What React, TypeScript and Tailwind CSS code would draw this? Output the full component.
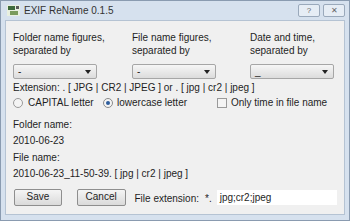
import React from "react";

const font = { fontFamily: '"Liberation Sans", Arial, sans-serif' };

const Combo: React.FC<{ value: string }> = ({ value }) => (
  <div className="flex h-[15px] w-[84px] items-center justify-between rounded-[2px] border border-[#a6a6a6] bg-gradient-to-b from-[#f6f6f6] to-[#dcdcdc] pl-[4px] pr-[5px] text-[10px] leading-none text-[#222]">
    <span>{value}</span>
    <svg width="6" height="4" viewBox="0 0 6 4"><path d="M0 0h6L3 4z" fill="#222" /></svg>
  </div>
);

export default function App() {
  return (
    <div style={font} className="flex h-[221px] w-[350px] flex-col overflow-hidden border border-[#8a9bb0] bg-[#d6e1ee] text-[10px] text-[#1e1e1e]">
      <div className="flex h-[19px] shrink-0 items-center pl-[6px] pr-[4px]">
        <svg width="13" height="11" viewBox="0 0 13 11" className="mr-[4px]">
          <rect x="0" y="0" width="13" height="11" fill="#e8efe0" />
          <rect x="1" y="1" width="7" height="4" fill="#3e6a3c" />
          <rect x="3" y="6" width="8" height="4" fill="#7a9b5c" />
          <rect x="9" y="1" width="3" height="3" fill="#5a5a5a" />
        </svg>
        <span className="text-[10px] text-[#333]">EXIF ReName 0.1.5</span>
        <div className="ml-auto flex gap-[3px]">
          <div className="flex h-[13px] w-[22px] items-center justify-center rounded-[2px] border border-[#9aa9bb] bg-[#e6edf5] text-[8px] text-[#666]">?</div>
          <div className="flex h-[13px] w-[22px] items-center justify-center rounded-[2px] border border-[#9aa9bb] bg-[#e6edf5] text-[8px] text-[#666]">✕</div>
        </div>
      </div>
      <div className="mx-[4px] mb-[5px] flex-1 border border-[#b5c3d3] bg-[#f0f0f0] px-[7px] pt-[10px]">
        <div className="grid grid-cols-[119px_118px_1fr] leading-[13px]">
          <div>
            <div>Folder name figures,</div>
            <div>separated by</div>
          </div>
          <div>
            <div>File name figures,</div>
            <div>separated by</div>
          </div>
          <div>
            <div>Date and time,</div>
            <div>separated by</div>
          </div>
          <div className="mt-[7px]"><Combo value="-" /></div>
          <div className="mt-[7px]"><Combo value="-" /></div>
          <div className="mt-[7px]"><Combo value="_" /></div>
        </div>
        <div className="mt-[2px] whitespace-nowrap leading-[14px]">Extension: . [ JPG | CR2 | JPEG ] or . [ jpg | cr2 | jpeg ]</div>
        <div className="mt-[1px] flex items-center whitespace-nowrap leading-[14px]">
          <span className="mr-[5px] h-[10px] w-[10px] shrink-0 rounded-full border border-[#9a9a9a] bg-[#f4f4f4]" />
          <span className="w-[75px]">CAPITAL letter</span>
          <span className="mr-[4px] flex h-[10px] w-[10px] shrink-0 items-center justify-center rounded-full border border-[#8a8a8a] bg-[#f4f4f4]">
            <span className="h-[4px] w-[4px] rounded-full bg-[#2d5d9c]" />
          </span>
          <span className="w-[100px]">lowercase letter</span>
          <span className="mr-[4px] h-[10px] w-[10px] shrink-0 border border-[#9a9a9a] bg-[#f4f4f4]" />
          <span>Only time in file name</span>
        </div>
        <div className="mt-[8px] leading-[14px]">Folder name:</div>
        <div className="mt-[2px] leading-[14px]">2010-06-23</div>
        <div className="mt-[3px] leading-[14px]">File name:</div>
        <div className="mt-[2px] leading-[14px]">2010-06-23_11-50-39. [ jpg | cr2 | jpeg ]</div>
        <div className="mt-[7px] flex items-center whitespace-nowrap">
          <button className="ml-[1px] h-[17px] w-[48px] rounded-[2px] border border-[#8e8e8e] bg-gradient-to-b from-[#f5f5f5] to-[#dadada] text-[10px] leading-none">Save</button>
          <button className="ml-[15px] h-[17px] w-[49px] rounded-[2px] border border-[#8e8e8e] bg-gradient-to-b from-[#f5f5f5] to-[#dadada] text-[10px] leading-none">Cancel</button>
          <span className="ml-[9px] mt-[3px]">File extension:</span>
          <span className="ml-[6px] mt-[3px]">*.</span>
          <div className="ml-[5px] mt-[1px] flex h-[15px] w-[121px] items-center bg-white pl-[3px]">jpg;cr2;jpeg</div>
        </div>
      </div>
    </div>
  );
}
